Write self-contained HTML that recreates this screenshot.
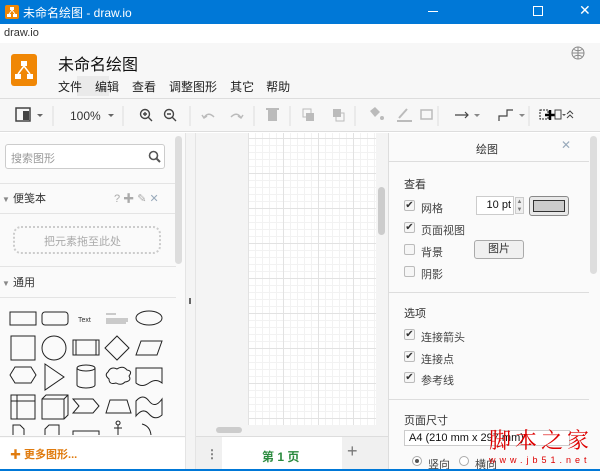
<!DOCTYPE html>
<html><head><meta charset="utf-8"><style>
*{box-sizing:border-box;margin:0;padding:0}
body{width:600px;height:471px;overflow:hidden;font-family:"Liberation Sans","Noto Sans CJK SC",sans-serif;background:#fff;position:relative;font-size:11px;color:#333}
.a{position:absolute}
.cb{position:absolute;width:11px;height:11px;border:1px solid #bbb;border-radius:2px;background:#f6f6f6;font-size:10px;line-height:9px;text-align:center;color:#333}
.lbl{position:absolute;font-size:11px;color:#444}
svg{position:absolute}
</style></head><body>
<div class="a" style="left:0;top:0;width:600px;height:24px;background:#0078d7;color:#fff">
 <div class="a" style="left:5px;top:5px;width:14px;height:14px;background:#f08705;border-radius:2px"></div>
 <svg style="left:6px;top:6px" width="12" height="12"><rect x="4" y="1" width="4" height="3" fill="#fff"/><rect x="1" y="8" width="4" height="3" fill="#fff"/><rect x="7" y="8" width="4" height="3" fill="#fff"/><path d="M6 4L3 8M6 4L9 8" stroke="#fff"/></svg>
 <div class="a" style="left:23px;top:4px;font-size:12px">未命名绘图 - draw.io</div>
 <div class="a" style="left:428px;top:11px;width:10px;height:1px;background:#fff"></div>
 <div class="a" style="left:533px;top:6px;width:10px;height:10px;border:1px solid #fff"></div>
 <div class="a" style="left:579px;top:2px;font-size:14px">✕</div>
</div>
<div class="a" style="left:4px;top:27px;font-size:11px;color:#333">draw.io</div>
<div class="a" style="left:0;top:43px;width:600px;height:56px;background:#f7f7f7;border-bottom:1px solid #ddd"></div>
<div class="a" style="left:11px;top:54px;width:26px;height:32px;background:#f08705;border-radius:3px"></div>
<svg style="left:13px;top:60px" width="22" height="22"><rect x="8" y="1" width="6" height="5" fill="#fff"/><rect x="2" y="14" width="6" height="5" fill="#fff"/><rect x="14" y="14" width="6" height="5" fill="#fff"/><path d="M11 6L5 14M11 6L17 14" stroke="#fff" stroke-width="1.5"/></svg>
<div class="a" style="left:58px;top:51px;font-size:16px;color:#111">未命名绘图</div>
<div class="a" style="left:77px;top:76px;width:32px;height:20px;background:#eaeaea"></div>
<div class="a" style="left:58px;top:78px;font-size:12px;color:#222;word-spacing:0"><span style="margin-right:13px">文件</span><span style="margin-right:13px">编辑</span><span style="margin-right:13px">查看</span><span style="margin-right:13px">调整图形</span><span style="margin-right:12px">其它</span><span>帮助</span></div>
<svg style="left:571px;top:46px" width="14" height="14"><circle cx="7" cy="7" r="6" fill="none" stroke="#888"/><path d="M1 7H13M7 1V13M3 3.5Q7 6 11 3.5M3 10.5Q7 8 11 10.5" stroke="#888" fill="none"/></svg>
<!-- toolbar -->
<div class="a" style="left:0;top:99px;width:600px;height:33px;background:#f7f7f7;border-bottom:1px solid #ddd"></div>
<svg style="left:14px;top:106px" width="600" height="20" >
 <rect x="2" y="2" width="14" height="13" fill="none" stroke="#444" stroke-width="1.5"/><rect x="9" y="5" width="6" height="9" fill="#444"/>
 <path d="M23 8l3 3 3-3z" fill="#666"/>
 <text x="56" y="14" font-size="12" fill="#333" font-family="Liberation Sans">100%</text>
 <path d="M94 8l3 3 3-3z" fill="#666"/>
 <circle cx="131" cy="8" r="4.5" fill="none" stroke="#444" stroke-width="1.4"/><path d="M134 11l4 4M129 8h4M131 6v4" stroke="#444" stroke-width="1.4"/>
 <circle cx="155" cy="8" r="4.5" fill="none" stroke="#444" stroke-width="1.4"/><path d="M158 11l4 4M153 8h4" stroke="#444" stroke-width="1.4"/>
 <path d="M190 12q4-7 10-1M188 9l2 3 3-2" stroke="#bbb" fill="none" stroke-width="1.5"/>
 <path d="M227 12q-4-7-10-1M229 9l-2 3-3-2" stroke="#bbb" fill="none" stroke-width="1.5"/>
 <rect x="254" y="4" width="9" height="11" fill="#bbb"/><rect x="252" y="2" width="13" height="2" fill="#bbb"/>
 <rect x="289" y="3" width="8" height="8" fill="none" stroke="#bbb"/><rect x="292" y="7" width="8" height="8" fill="#bbb"/>
 <rect x="319" y="3" width="8" height="8" fill="#bbb"/><rect x="322" y="7" width="8" height="8" fill="none" stroke="#bbb"/>
 <path d="M356 5l5-4 5 5-5 5z" fill="#bbb"/><circle cx="368" cy="12" r="2" fill="#bbb"/>
 <path d="M383 15h15M385 12l8-9" stroke="#bbb" stroke-width="2"/>
 <rect x="407" y="4" width="11" height="9" fill="none" stroke="#bbb" stroke-width="1.5"/>
 <path d="M441 9h13M451 6l3 3-3 3" stroke="#444" fill="none" stroke-width="1.2"/><path d="M460 8l3 3 3-3z" fill="#888"/>
 <path d="M485 15v-5h8v-6h6" stroke="#444" fill="none" stroke-width="1.2"/><path d="M505 8l3 3 3-3z" fill="#888"/>
 <rect x="526" y="4" width="8" height="9" fill="none" stroke="#222" stroke-dasharray="2 1"/><path d="M531 9h10M536 4v10" stroke="#000" stroke-width="2.5"/><rect x="541" y="4" width="6" height="9" fill="none" stroke="#444"/><path d="M548 8l2 2 2-2z" fill="#555"/><path d="M553 8l3-3 3 3M553 12l3-3 3 3" stroke="#444" fill="none"/>
 <path d="M39 0v20M109 0v20M176 0v20M240 0v20M276 0v20M341 0v20M424 0v20M515 0v20" stroke="#ddd"/>
</svg>
<!-- left panel -->
<div class="a" style="left:0;top:133px;width:185px;height:305px;background:#fafafa"></div>
<div class="a" style="left:5px;top:144px;width:160px;height:25px;border:1px solid #ccc;border-radius:3px;background:#fff"></div>
<div class="a" style="left:11px;top:150px;font-size:11px;color:#999">搜索图形</div>
<svg style="left:148px;top:150px" width="14" height="14"><circle cx="5.5" cy="5.5" r="4" fill="none" stroke="#555" stroke-width="1.6"/><path d="M8.5 8.5l3.5 3.5" stroke="#555" stroke-width="2"/></svg>
<div class="a" style="left:0;top:183px;width:176px;height:1px;background:#e4e4e4"></div>
<div class="a" style="left:2px;top:190px;font-size:11px;color:#333"><span style="color:#888;font-size:8px">▼</span> 便笺本</div>
<div class="a" style="left:114px;top:190px;font-size:11px;color:#aaa">? ✚ ✎ <span style="color:#9ab">✕</span></div>
<div class="a" style="left:0;top:213px;width:176px;height:1px;background:#e4e4e4"></div>
<div class="a" style="left:13px;top:226px;width:148px;height:28px;border:2px dotted #ccc;border-radius:8px"></div>
<div class="a" style="left:44px;top:233px;font-size:11px;color:#aaa">把元素拖至此处</div>
<div class="a" style="left:0;top:266px;width:176px;height:1px;background:#e4e4e4"></div>
<div class="a" style="left:2px;top:274px;font-size:11px;color:#333"><span style="color:#888;font-size:8px">▼</span> 通用</div>
<div class="a" style="left:0;top:297px;width:176px;height:1px;background:#e4e4e4"></div>
<svg style="left:0;top:300px" width="176" height="136" fill="none" stroke="#222" stroke-width="1">
 <rect x="10" y="12" width="26" height="13"/><rect x="42" y="12" width="26" height="13" rx="3"/>
 <text x="78" y="22" font-size="7" fill="#333" stroke="none" font-family="Liberation Sans">Text</text>
 <path d="M106 14h10M106 19h22M106 21h22M106 23h20" stroke="#999"/>
 <ellipse cx="149" cy="18" rx="13" ry="7"/>
 <rect x="11" y="36" width="24" height="24"/><circle cx="54" cy="48" r="12"/>
 <rect x="73" y="40" width="26" height="15"/><path d="M76 40v15M96 40v15"/>
 <path d="M117 36l12 12-12 12-12-12z"/><path d="M141 41h21l-5 14h-21z"/>
 <path d="M10 75l5-8h16l5 8-5 8h-16z"/><path d="M45 64l19 13-19 13z"/>
 <path d="M77 68v17a9 3 0 0 0 18 0v-17a9 3 0 0 0-18 0a9 3 0 0 0 18 0"/>
 <path d="M108 72q3-6 9-3q6-4 10 1q6 1 2 6q3 5-4 6q-4 4-9 1q-7 2-7-4q-5-4-1-7z"/>
 <path d="M136 68h26v15q-6-5-13 0t-13 0z"/>
 <rect x="11" y="95" width="24" height="24"/><path d="M11 101h24M17 95v24"/>
 <path d="M42 99l4-4h22v20l-4 4h-22zM42 99h22v20M64 99l4-4"/>
 <path d="M73 99h20l6 7-6 7h-20l6-7z"/><path d="M106 113l4-13h17l4 13z"/>
 <path d="M136 101q7-8 13 0t13-2v16q-7 6-13-1t-13 2z"/>
 <path d="M13 135v-10h7l4 4v6M45 135v-6l4-4h10v10M73 135v-4h26v4M118 121a2 2 0 1 0 0.1 0M118 125v10M114 128h8M142 124q8 2 9 11"/>
</svg>
<div class="a" style="left:175px;top:136px;width:7px;height:128px;background:#ddd;border-radius:4px"></div>
<div class="a" style="left:0;top:436px;width:185px;height:1px;background:#ddd"></div>
<div class="a" style="left:10px;top:446px;font-size:11px;color:#e07b0e;font-weight:bold">✚ 更多图形...</div>
<div class="a" style="left:185px;top:133px;width:11px;height:338px;background:#f4f4f4;border-left:1px solid #e4e4e4;border-right:1px solid #e4e4e4"></div>
<div class="a" style="left:189px;top:298px;width:2px;height:6px;border-left:1px solid #666;border-right:1px solid #666"></div>
<!-- canvas -->
<div class="a" style="left:196px;top:133px;width:192px;height:303px;background:#f4f4f4"></div>
<div class="a" style="left:248px;top:133px;width:128px;height:292px;background-color:#fff;background-image:linear-gradient(#e2e2e2 1px,transparent 1px),linear-gradient(90deg,#e2e2e2 1px,transparent 1px),linear-gradient(#f2f2f2 1px,transparent 1px),linear-gradient(90deg,#f2f2f2 1px,transparent 1px);background-size:35px 35px,35px 35px,7px 7px,7px 7px;background-position:0 5px,0 0,0 5px,0 0"></div>
<div class="a" style="left:378px;top:187px;width:7px;height:48px;background:#ccc;border-radius:4px"></div>
<div class="a" style="left:216px;top:427px;width:26px;height:6px;background:#ccc;border-radius:3px"></div>
<div class="a" style="left:196px;top:436px;width:192px;height:35px;background:#f0f0f0;border-top:1px solid #ddd"></div>
<div class="a" style="left:222px;top:437px;width:120px;height:34px;background:#fff"></div>
<div class="a" style="left:206px;top:447px;font-size:12px;color:#777;font-weight:bold">⋮</div>
<div class="a" style="left:262px;top:448px;font-size:12px;color:#2a8a3e;font-weight:bold">第 1 页</div>
<div class="a" style="left:347px;top:441px;font-size:18px;color:#777">+</div>
<!-- right panel -->
<div class="a" style="left:388px;top:133px;width:212px;height:338px;background:#fafafa;border-left:1px solid #ddd"></div>
<div class="a" style="left:476px;top:141px;font-size:11px;color:#333">绘图</div>
<div class="a" style="left:561px;top:138px;font-size:12px;color:#9ab">✕</div>
<div class="a" style="left:389px;top:161px;width:200px;height:1px;background:#ddd"></div>
<div class="a" style="left:404px;top:176px;font-size:11px;color:#333">查看</div>
<div class="cb" style="left:404px;top:200px">✔</div><div class="lbl" style="left:421px;top:200px">网格</div>
<div class="a" style="left:476px;top:196px;width:38px;height:19px;border:1px solid #ccc;background:#fff;font-size:11px;text-align:right;padding:2px 2px 0 0;color:#111">10 pt</div>
<div class="a" style="left:515px;top:197px;width:9px;height:17px;border:1px solid #ccc;background:#eee;font-size:6px;line-height:8px;color:#777;text-align:center">▲<br>▼</div>
<div class="a" style="left:529px;top:196px;width:40px;height:20px;border:1px solid #888;border-radius:3px;background:#e8e8e8;padding:3px"><div style="width:100%;height:100%;background:#ccc;border:1px solid #333"></div></div>
<div class="cb" style="left:404px;top:222px">✔</div><div class="lbl" style="left:421px;top:222px">页面视图</div>
<div class="cb" style="left:404px;top:244px"></div><div class="lbl" style="left:421px;top:244px">背景</div>
<div class="a" style="left:474px;top:240px;width:50px;height:19px;border:1px solid #aaa;border-radius:3px;background:#f0f0f0;font-size:11px;text-align:center;line-height:17px">图片</div>
<div class="cb" style="left:404px;top:266px"></div><div class="lbl" style="left:421px;top:266px">阴影</div>
<div class="a" style="left:389px;top:292px;width:200px;height:1px;background:#ddd"></div>
<div class="a" style="left:404px;top:305px;font-size:11px;color:#333">选项</div>
<div class="cb" style="left:404px;top:329px">✔</div><div class="lbl" style="left:421px;top:329px">连接箭头</div>
<div class="cb" style="left:404px;top:351px">✔</div><div class="lbl" style="left:421px;top:351px">连接点</div>
<div class="cb" style="left:404px;top:372px">✔</div><div class="lbl" style="left:421px;top:372px">参考线</div>
<div class="a" style="left:389px;top:399px;width:200px;height:1px;background:#ddd"></div>
<div class="a" style="left:404px;top:412px;font-size:11px;color:#333">页面尺寸</div>
<div class="a" style="left:404px;top:430px;width:166px;height:16px;border:1px solid #ccc;background:#fff;font-size:11px;padding:1px 4px;color:#111">A4 (210 mm x 297 mm)</div>
<div class="a" style="left:412px;top:456px;width:10px;height:10px;border:1px solid #aaa;border-radius:50%;background:#fff"><div style="margin:2px;width:4px;height:4px;border-radius:50%;background:#555"></div></div>
<div class="lbl" style="left:428px;top:456px">竖向</div>
<div class="a" style="left:459px;top:456px;width:10px;height:10px;border:1px solid #aaa;border-radius:50%;background:#fff"></div>
<div class="lbl" style="left:475px;top:456px">横向</div>
<div class="a" style="left:590px;top:136px;width:7px;height:138px;background:#ddd;border-radius:4px"></div>
<div class="a" style="left:489px;top:424px;font-size:22px;color:#d00;font-family:'Noto Serif CJK SC',serif;letter-spacing:4px">脚本之家</div>
<div class="a" style="left:489px;top:455px;font-size:9px;color:#d00;letter-spacing:4px">www.jb51.net</div>
<div class="a" style="left:0;top:469px;width:600px;height:2px;background:#0078d7"></div>
</body></html>
